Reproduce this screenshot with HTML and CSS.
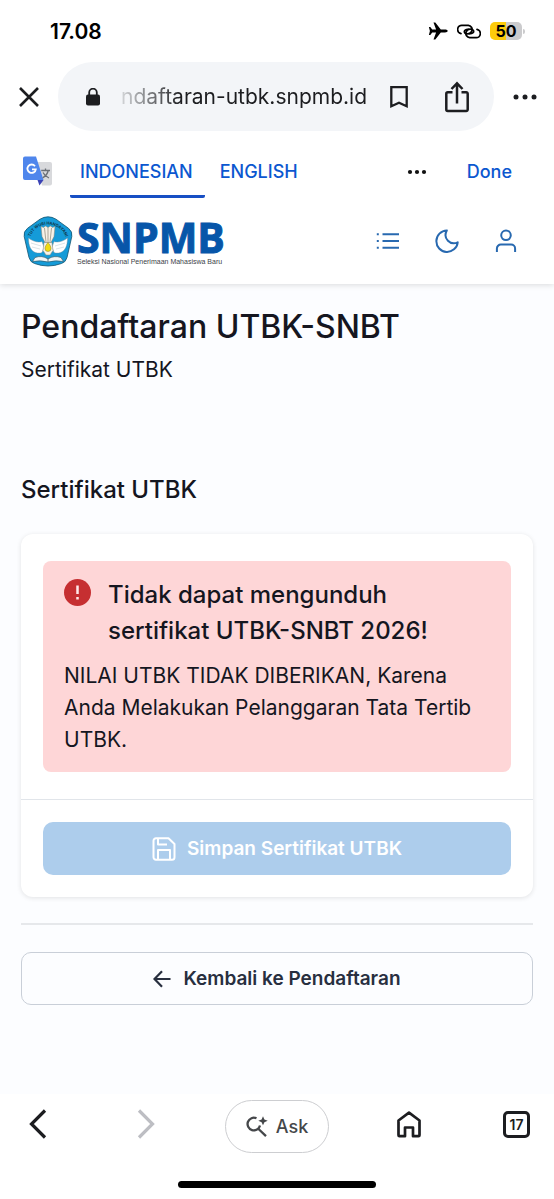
FILE: index.html
```html
<!DOCTYPE html>
<html lang="id">
<head>
<meta charset="utf-8">
<meta name="viewport" content="width=device-width, initial-scale=1">
<title>Pendaftaran UTBK-SNBT</title>
<link rel="stylesheet" href="styles.css">
</head>
<body>
<div class="status">
  <span class="clock">17.08</span>
  <div class="indicators">
    <svg width="20" height="18" viewBox="0 0 20 18" aria-hidden="true"><path d="M19.7 9c0-.8-1.200-1.400-2.700-1.400h-4.200L7.300.6H5.500l2.600 7H4.200L2.300 5H.9l1 4-1 4h1.400l1.900-2.600h3.900l-2.600 7h1.800l5.500-7H17c1.500 0 2.700-.6 2.700-1.400z"/></svg>
    <svg width="24" height="15" viewBox="0 0 26 16" fill="none" stroke="#000" stroke-width="1.900" stroke-linecap="round" aria-hidden="true"><path d="M4.300 10.200A4.500 4.500 0 0 1 5.500 1.300h6.800a4.600 4.600 0 0 1 3.900 5.900c-.8 2.800-3.500 3.600-6 3.200-2.300-.4-2.900-2.600-1.300-3.900.9-.7 2-.9 3.400-.8"/><path d="M21.700 5.800a4.500 4.500 0 0 1-1.200 8.900h-6.800a4.600 4.600 0 0 1-3.900-5.900c.8-2.800 3.500-3.600 6-3.200 2.300.4 2.900 2.600 1.300 3.900-.9.7-2 .9-3.400.8"/></svg>
    <div class="battery"><span class="cell">50</span><i class="nub"></i></div>
  </div>
</div>

<div class="browser">
  <button class="plain" aria-label="Tutup"><svg width="20" height="20" viewBox="0 0 20 20" fill="none" stroke="#1c1d20" stroke-width="2.600"><path d="M1 1l18 18M19 1L1 19"/></svg></button>
  <div class="address">
    <svg class="lock" width="14" height="18" viewBox="0 0 14 18" aria-hidden="true"><rect y="6.500" width="14" height="11" rx="2" fill="#1c1d20"/><path d="M3.200 7V4.500a3.800 3.800 0 0 1 7.600 0V7" fill="none" stroke="#1c1d20" stroke-width="1.800"/></svg>
    <span class="url">ndaftaran-utbk.snpmb.id</span>
    <button class="plain" aria-label="Markah"><svg width="18" height="22" viewBox="0 0 18 22" fill="none" stroke="#1c1d20" stroke-width="2.300"><path d="M1.300 1.200h15.400v19L9 16.700l-7.700 3.500z"/></svg></button>
    <button class="plain share" aria-label="Bagikan"><svg width="24" height="32" viewBox="0 0 24 32" fill="none" stroke="#1c1d20" stroke-width="2.500"><path d="M7.500 11.200H2.800a1.500 1.500 0 0 0-1.500 1.500v15.800A1.500 1.500 0 0 0 2.800 30h18.400a1.500 1.500 0 0 0 1.500-1.500V12.700a1.500 1.500 0 0 0-1.500-1.500h-4.700M12 22.500V2.500M6.500 8L12 2.300 17.500 8"/></svg></button>
  </div>
  <button class="plain" aria-label="Lainnya"><svg width="24" height="6" viewBox="0 0 24 6" fill="#1c1d20"><circle cx="3" cy="3" r="2.500"/><circle cx="12" cy="3" r="2.500"/><circle cx="21" cy="3" r="2.500"/></svg></button>
</div>

<div class="translate">
  <svg class="gt" width="30" height="31" viewBox="0 0 30 31" role="img" aria-label="Google Terjemahan">
    <path d="M13 6h14a2 2 0 0 1 2 2v19.500a2 2 0 0 1-2 2H19z" fill="#d8d9dc"/>
    <path d="M14.500 24h6L16.500 29.500z" fill="#3a42b5"/>
    <path d="M2 .5h11L20.500 24H2a2 2 0 0 1-2-2V2.500a2 2 0 0 1 2-2z" fill="#4f86ec"/>
    <path d="M12 10.200A4.200 4.200 0 1 0 12.800 13.300H9" fill="none" stroke="#fff" stroke-width="1.800"/>
    <path d="M18.200 14.500H27M22.500 12.500v2M25.200 14.500c-.7 3.500-3 6-5.500 7.300M20 16.500c1.200 2.500 3.500 4.500 6 5.500" fill="none" stroke="#6b7077" stroke-width="1.300"/>
  </svg>
  <div class="tabs">
    <button class="tab active">INDONESIAN</button>
    <button class="tab">ENGLISH</button>
  </div>
  <button class="plain dots" aria-label="Opsi"><svg width="20" height="6" viewBox="0 0 20 6" fill="#111"><circle cx="3" cy="3" r="2.100"/><circle cx="10" cy="3" r="2.100"/><circle cx="17" cy="3" r="2.100"/></svg></button>
  <button class="done">Done</button>
</div>

<header class="site">
  <a class="brand" href="#">
    <svg class="emblem" width="50" height="51" viewBox="0 0 50 51" role="img" aria-label="Tut Wuri Handayani">
      <path d="M25 .8Q29 .8 33 3.200L45.500 12.300Q49.800 15.800 48.800 20.500L44 41.500Q42.500 46.500 38.500 47.500Q25 52.500 11.500 47.500Q7.500 46.500 6 41.500L1.200 20.500Q.2 15.800 4.500 12.300L17 3.200Q21 .8 25 .8z" fill="#159bd8" stroke="#14536f" stroke-width=".8"/>
      <path id="arc" d="M6.500 24A18.800 18.800 0 0 1 43.500 24" fill="none"/>
      <text class="motto"><textPath href="#arc" startOffset="50%" text-anchor="middle">TUT WURI HANDAYANI</textPath></text>
      <path d="M18 10.500l2.500 1 2-1.500 2.500 1.500 2.500-1.500 2 1.500 2.500-1-1 10-3 6h-6l-3-6z" fill="#f6f2e8" stroke="#8b8574" stroke-width=".5"/>
      <path d="M21.500 12l1.500 14M25 11.500V27M28.500 12L27 26" stroke="#8b8574" stroke-width=".7"/>
      <path d="M19 25.500C15 27 9 25 5.500 22c0 8 2.500 13 7 14.500 3 1 5 .5 6.500 0l2-5zM31 25.500c4 1.500 10-.5 13.500-3.500 0 8-2.500 13-7 14.500-3 1-5 .5-6.500 0l-2-5z" fill="#fff" stroke="#778b94" stroke-width=".4"/>
      <path d="M8 27l10 3M9 31l8 2M42 27l-10 3M41 31l-8 2" stroke="#b9c6cc" stroke-width=".5"/>
      <path d="M21 26.500h8l1 8-3 4.500h-4l-3-4.500z" fill="#f6f2e8" stroke="#8b8574" stroke-width=".5"/>
      <path d="M25 26.500c2 2.500 3 4 3 6a3 3 0 0 1-6 0c0-2 1-3.500 3-6z" fill="#f1dc12" stroke="#8d7b22" stroke-width=".5"/>
      <path d="M12 41.500q7-2.500 13 1.500 6-4 13-1.500l2.500 4q-8-1.500-15.500.5-7.500-2-15.500-.5z" fill="#f2f6f7" stroke="#365d6c" stroke-width=".7"/>
      <path d="M25 42.500V46" stroke="#365d6c" stroke-width=".8"/>
    </svg>
    <span class="wordmark"><span class="name">SNPMB</span><span class="tagline">Seleksi Nasional Penerimaan Mahasiswa Baru</span></span>
  </a>
  <nav class="tools">
    <button class="plain" aria-label="Menu"><svg width="24" height="24" viewBox="0 0 24 24" fill="none" stroke="#2869b0" stroke-width="2"><path d="M6.500 5.200H23M6.500 12H23M6.500 18.800H23M.8 5.200h2M.8 12h2M.8 18.800h2"/></svg></button>
    <button class="plain" aria-label="Mode gelap"><svg width="24" height="24" viewBox="0 0 24 24" fill="none" stroke="#2869b0" stroke-width="2" stroke-linejoin="round"><path d="M11.800 1.500A10.700 10.700 0 1 0 22.700 13.300C15.500 16.800 7.500 9.500 11.800 1.500z"/></svg></button>
    <button class="plain" aria-label="Akun"><svg width="24" height="24" viewBox="0 0 24 24" fill="none" stroke="#2869b0" stroke-width="2"><circle cx="12" cy="6.300" r="4.800"/><path d="M2.900 23v-3.500a4 4 0 0 1 4-4h10.200a4 4 0 0 1 4 4V23"/></svg></button>
  </nav>
</header>

<main>
  <h1>Pendaftaran UTBK-SNBT</h1>
  <p class="subtitle">Sertifikat UTBK</p>
  <h2>Sertifikat UTBK</h2>
  <section class="card">
    <div class="card-body">
      <div class="alert" role="alert">
        <div class="alert-head">
          <svg width="27" height="27" viewBox="0 0 27 27" aria-hidden="true"><circle cx="13.500" cy="13.500" r="13.500" fill="#c62f31"/><path d="M13.500 6.500v8.500M13.500 18v2.500" stroke="#ffe9e9" stroke-width="2.500"/></svg>
          <h3>Tidak dapat mengunduh sertifikat UTBK-SNBT 2026!</h3>
        </div>
        <p>NILAI UTBK TIDAK DIBERIKAN, Karena Anda Melakukan Pelanggaran Tata Tertib UTBK.</p>
      </div>
    </div>
    <div class="card-foot">
      <button class="btn primary" disabled><svg width="24" height="24" viewBox="0 0 24 24" fill="none" stroke="#fff" stroke-width="2" stroke-linejoin="round"><path d="M16.500 1.200H4A2.500 2.500 0 0 0 1.500 3.700v16.600A2.500 2.500 0 0 0 4 22.800h16a2.500 2.500 0 0 0 2.500-2.500V7zM6 1.500v6h9M6 22.500v-9.500h12v9.500"/></svg>Simpan Sertifikat UTBK</button>
    </div>
  </section>
  <hr>
  <a class="btn outline" href="#"><svg width="18" height="18" viewBox="0 0 18 18" fill="none" stroke="#282f3f" stroke-width="2.200"><path d="M17.500 9H1.800M9 1.200L1.500 9 9 16.800"/></svg>Kembali ke Pendaftaran</a>
</main>

<footer class="bottom">
  <div class="bottom-nav">
    <div class="nav-group">
      <button class="plain key" aria-label="Kembali"><svg width="18" height="30" viewBox="0 0 18 30" fill="none" stroke="#1c1d20" stroke-width="3.200"><path d="M16 1.500L2.500 15 16 28.500"/></svg></button>
      <button class="plain key" aria-label="Maju"><svg width="18" height="30" viewBox="0 0 18 30" fill="none" stroke="#bdbec3" stroke-width="3.200"><path d="M2 1.500L15.500 15 2 28.500"/></svg></button>
    </div>
    <button class="ask"><svg width="22" height="22" viewBox="0 0 22 22" fill="none" stroke="#45474a" stroke-width="2.300"><path d="M10.500 2.300A6.300 6.300 0 1 0 14 9.500M12 12.500l8 7.700"/><path d="M17 .3l1.400 3.100 3.300 1.400-3.300 1.400L17 9.300l-1.400-3.100-3.300-1.400 3.300-1.400z" fill="#45474a" stroke="none"/></svg>Ask</button>
    <div class="nav-group">
      <button class="plain key" aria-label="Beranda"><svg width="24" height="27" viewBox="0 0 24 27" fill="none" stroke="#1c1d20" stroke-width="2.700" stroke-linejoin="round"><path d="M12 1.700L1.500 9.500v14.700q0 1 1 1H8v-8.700h8v8.700h5.500q1 0 1-1V9.500z"/></svg></button>
      <button class="plain key tabs-count" aria-label="17 tab">17</button>
    </div>
  </div>
  <div class="home-bar"></div>
</footer>
</body>
</html>
```
FILE: styles.css
```css
* { box-sizing: border-box; }
body {
  margin: 0;
  min-height: 100vh;
  display: flex;
  flex-direction: column;
  background: #fff;
  color: #15161f;
  font-family: Inter, "Liberation Sans", sans-serif;
}
button { font-family: inherit; cursor: pointer; }
svg { display: block; flex: none; }
h1, h2, h3, p { margin: 0; font-weight: 500; }
.plain { display: flex; padding: 0; border: 0; background: none; }

.status {
  display: flex;
  justify-content: space-between;
  align-items: center;
  height: 62px;
  padding: 0 29px 0 50px;
  color: #000;
}
.clock { font-size: 21px; font-weight: 600; }
.indicators { display: flex; align-items: center; gap: 9px; }
.battery { display: flex; align-items: center; gap: 1px; }
.cell {
  width: 32px;
  border-radius: 5px;
  background: linear-gradient(90deg, #fdcb0b 50%, #cbcbcd 50%);
  font-size: 16px;
  line-height: 18px;
  font-weight: 700;
  text-align: center;
}
.nub { width: 2px; height: 5px; border-radius: 0 2px 2px 0; background: #cbcbcd; }

.browser { display: flex; align-items: center; gap: 19px; padding: 0 17px 0 19px; }
.address {
  flex: 1;
  display: flex;
  align-items: center;
  height: 69px;
  padding: 0 25px 0 28px;
  border-radius: 35px;
  background: #f3f5f8;
}
.lock { margin-right: 20px; }
.url {
  flex: 1;
  text-align: right;
  white-space: nowrap;
  font-size: 21px;
  color: transparent;
  background: linear-gradient(90deg, #1c1d2022 0, #1c1d20 25%);
  background-clip: text;
  -webkit-background-clip: text;
  margin-right: 23px;
}
.share { margin-left: 37px; }

.translate { display: flex; align-items: center; height: 67px; padding: 0 42px 0 23px; }
.gt { margin: 13px 17px 0 0; }
.tabs { display: flex; flex: 1; align-self: stretch; }
.tab, .done { border: 0; background: none; color: #0b57d0; font-size: 18px; font-weight: 500; }
.tab { padding: 16px 12px 0 15px; border-bottom: 3px solid transparent; }
.tab.active { padding-left: 10px; border-color: #174fc4; border-radius: 2px; }
.dots { margin: 14px 40px 0 0; }
.done { padding: 14px 0 0; }

.site {
  display: flex;
  justify-content: space-between;
  align-items: center;
  height: 86px;
  padding: 0 36px 0 23px;
  background: #fff;
  box-shadow: 0 1px 6px #00000024;
  clip-path: inset(0 0 -8px);
  position: relative;
}
.brand { display: flex; align-items: center; gap: 4px; color: #0756a9; text-decoration: none; }
.emblem { overflow: visible; }
.motto { font-size: 4px; font-weight: 700; fill: #113748; }
.wordmark { display: flex; flex-direction: column; }
.name { font: 700 41px/42px "Open Sans", sans-serif; -webkit-text-stroke: 1px #0756a9; }
.tagline { font: 7px/8px "Liberation Sans", sans-serif; color: #3c4248; white-space: nowrap; }
.tools { display: flex; gap: 35px; }

main { flex: 1; padding: 24px 21px; background: #fcfdff; }
h1 { font-size: 32px; line-height: 38px; }
.subtitle { margin-top: 10px; font-size: 21px; line-height: 28px; font-weight: 400; }
h2 { margin: 88px 0 26px; font-size: 24px; line-height: 36px; }
.card { border-radius: 12px; background: #fff; box-shadow: 0 1px 5px #0000001c; }
.card-body { padding: 27px 22px; }
.alert { padding: 16px 21px; border-radius: 8px; background: #fed6d7; }
.alert-head { display: flex; align-items: flex-start; gap: 17px; }
.alert-head svg { margin-top: 2px; }
h3 { font-size: 24px; line-height: 36px; }
.alert p { margin-top: 11px; font-size: 21px; line-height: 32px; font-weight: 400; }
.card-foot { padding: 22px; border-top: 1px solid #e1e5ea; }
.btn {
  display: flex;
  justify-content: center;
  align-items: center;
  gap: 11px;
  width: 100%;
  height: 53px;
  border: 0;
  border-radius: 10px;
  font-size: 19px;
  font-weight: 600;
  text-decoration: none;
}
.primary { background: #adcdec; color: #fff; }
hr { margin: 26px 0 27px; border: 0; border-top: 2px solid #e6e8eb; }
.outline { gap: 12px; border: 1px solid #c9cfd8; color: #282f3f; }

.bottom { padding: 6px 24px 11px; }
.bottom-nav { display: grid; grid-template-columns: 1fr 104px 1fr; gap: 66px; align-items: center; }
.nav-group { display: flex; justify-content: space-between; align-items: center; padding-bottom: 5px; }
.key { width: 27px; justify-content: center; }
.ask {
  display: flex;
  justify-content: center;
  align-items: center;
  gap: 8px;
  height: 53px;
  border: 1px solid #cdced1;
  border-radius: 27px;
  background: #fff;
  color: #45474a;
  font-size: 18px;
  font-weight: 500;
}
.tabs-count {
  border: 3px solid #1c1d20;
  border-radius: 5px;
  color: #1c1d20;
  font-size: 14px;
  line-height: 21px;
  font-weight: 600;
}
.home-bar { width: 198px; height: 7px; margin: 28px auto 0; border-radius: 4px; background: #000; }
```
